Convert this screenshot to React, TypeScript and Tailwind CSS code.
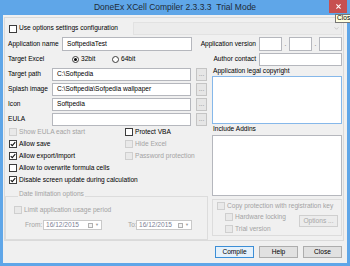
import type { ReactNode } from "react";

function CheckMark() {
  return (
    <svg viewBox="0 0 8 8" className="h-[6px] w-[6px]">
      <path d="M1 4.2 L3 6.2 L7 1.5" fill="none" stroke="#111" strokeWidth="1.4" />
    </svg>
  );
}

function Check({ label, checked, disabled }: { label: string; checked?: boolean; disabled?: boolean }) {
  return (
    <div className="flex h-[12px] items-center">
      <div
        className={
          disabled
            ? "ml-[1px] flex h-[8px] w-[8px] items-center justify-center border border-[#cfcfcf] bg-[#e9e9e9]"
            : "ml-[1px] flex h-[8px] w-[8px] items-center justify-center border border-[#3c3c3c] bg-white"
        }
      >
        {checked && <CheckMark />}
      </div>
      <span className={disabled ? "ml-[2px] whitespace-nowrap text-[#a3a3a3]" : "ml-[2px] whitespace-nowrap text-black"}>
        {label}
      </span>
    </div>
  );
}

function Radio({ label, selected }: { label: string; selected?: boolean }) {
  return (
    <div className="flex w-[40px] items-center">
      <div className="flex h-[7px] w-[7px] items-center justify-center rounded-full border border-[#3c3c3c] bg-white">
        {selected && <div className="h-[3px] w-[3px] rounded-full bg-black" />}
      </div>
      <span className="ml-[2px]">{label}</span>
    </div>
  );
}

function TextBox({ width, value }: { width: string; value?: string }) {
  return (
    <div className={`${width} flex h-[13px] items-center border border-[#b5b7bd] bg-white pl-[4px]`}>
      {value}
    </div>
  );
}

function PathRow({ label, value }: { label: string; value?: string }) {
  return (
    <div className="mt-[2px] flex h-[13px] items-center">
      <span className="w-[44px]">{label}</span>
      <TextBox width="w-[139px]" value={value} />
      <div className="ml-[5px] flex h-[13px] w-[11px] items-center justify-center border border-[#c4c4c4] bg-[#e6e6e6] text-[#8a8a8a] leading-none">
        ...
      </div>
    </div>
  );
}

function DatePicker({ width }: { width: string }) {
  return (
    <div className={`${width} flex h-[10px] items-center border border-[#c9c9c9] bg-white pl-[2px] text-[#7c7f95]`}>
      <span>16/12/2015</span>
      <div className="ml-auto mr-[2px] flex items-center">
        <div className="h-[5px] w-[5px] border border-[#b0b0b0] bg-[#f4f4f4]" />
        <span className="ml-[2px] text-[4px] text-[#9a9a9a]">▼</span>
      </div>
    </div>
  );
}

function Button({ children, primary, disabled }: { children: ReactNode; primary?: boolean; disabled?: boolean }) {
  const tone = primary
    ? "border-[#3c8ed6] bg-[#e5f1fb] text-black"
    : disabled
      ? "border-[#cfcfcf] bg-[#ececec] text-[#a6a6a6]"
      : "border-[#adadad] bg-[#e1e1e1] text-black";
  return <div className={`flex h-[12px] w-[39px] items-center justify-center border ${tone}`}>{children}</div>;
}

export default function App() {
  return (
    <div className="relative flex h-[266px] w-[350px] flex-col overflow-hidden bg-[#5fa6e8] font-['Liberation_Sans',Arial,sans-serif] text-[6.6px] leading-none text-black">
      <div className="flex h-[15px] items-center justify-center text-[8.5px] text-[#1e2a36]">
        DoneEx XCell Compiler 2.3.3.3&nbsp;&nbsp;Trial Mode
      </div>
      <div className="absolute left-[329px] top-0 flex h-[13px] w-[18px] items-center justify-center bg-[#c75050]">
        <svg viewBox="0 0 6 6" className="h-[5px] w-[5px]">
          <path d="M0.5 0.5 L5.5 5.5 M5.5 0.5 L0.5 5.5" stroke="#fff" strokeWidth="1.3" />
        </svg>
      </div>
      <div className="absolute left-[335px] top-[14px] flex h-[9px] w-[30px] items-center border border-[#767676] bg-[#ffffe1] pl-[1px] text-[6.6px]">
        Close
      </div>

      <div className="mx-[3px] flex h-[248px] flex-col bg-[#f0f0f0]">
        <div className="ml-[1px] mt-[2px] flex h-[224px] w-[340px] flex-col border border-[#dadada] pl-[3px] pr-[1px] pt-[4px]">
          <div className="flex h-[13px] items-center">
            <div className="ml-[1px] h-[8px] w-[8px] border border-[#3c3c3c] bg-white" />
            <span className="ml-[2px]">Use options settings configuration</span>
            <div className="ml-auto flex h-[13px] w-[209px] items-center justify-end border border-[#e2e2e2] bg-[#ececec] pr-[2px]">
              <svg viewBox="0 0 6 4" className="h-[3px] w-[5px]">
                <path d="M0.5 0.5 L3 3 L5.5 0.5" fill="none" stroke="#b0b0b0" strokeWidth="0.8" />
              </svg>
            </div>
          </div>

          <div className="mt-[2px] flex h-[14px] items-center">
            <span className="w-[54px]">Application name</span>
            <div className="flex h-[14px] w-[130px] items-center border border-[#b5b7bd] bg-white pl-[4px]">SoftpediaTest</div>
            <span className="ml-auto mr-[3px]">Application version</span>
            <div className="h-[14px] w-[23px] border border-[#b5b7bd] bg-white" />
            <span className="flex w-[7px] justify-center text-[#666]">.</span>
            <div className="h-[14px] w-[23px] border border-[#b5b7bd] bg-white" />
            <span className="flex w-[7px] justify-center text-[#666]">.</span>
            <div className="h-[14px] w-[23px] border border-[#b5b7bd] bg-white" />
          </div>

          <div className="mt-[2px] flex h-[13px] items-center">
            <span className="w-[64px]">Target Excel</span>
            <Radio label="32bit" selected />
            <Radio label="64bit" />
            <span className="ml-auto mr-[3px]">Author contact</span>
            <TextBox width="w-[83px]" />
          </div>

          <div className="flex">
            <div className="flex w-[200px] flex-col">
              <PathRow label="Target path" value="C:\Softpedia" />
              <PathRow label="Splash image" value="C:\Softpedia\Sofpedia wallpaper" />
              <PathRow label="Icon" value="Softpedia" />
              <PathRow label="EULA" />

              <div className="flex">
                <div className="w-[116px]">
                  <Check label="Show EULA each start" disabled />
                  <Check label="Allow save" checked />
                  <Check label="Allow export/import" checked />
                </div>
                <div>
                  <Check label="Protect VBA" />
                  <Check label="Hide Excel" disabled />
                  <Check label="Password protection" disabled />
                </div>
              </div>
              <Check label="Allow to overwrite formula cells" />
              <Check label="Disable screen update during calculation" checked />

              <div className="relative ml-[-3px] mt-[10px] flex h-[44px] w-[203px] flex-col border border-[#dcdcdc] pl-[7px]">
                <span className="absolute left-[12px] top-[-7px] flex h-[8px] items-center bg-[#f0f0f0] px-[1px] text-[#a3a3a3]">
                  Date limitation options
                </span>
                <div className="mt-[7px]">
                  <Check label="Limit application usage period" disabled />
                </div>
                <div className="mt-[4px] flex h-[10px] items-center">
                  <span className="ml-[12px] w-[18px] text-[#a3a3a3]">From:</span>
                  <DatePicker width="w-[59px]" />
                  <span className="ml-[26px] w-[8px] text-[#a3a3a3]">To:</span>
                  <DatePicker width="w-[56px]" />
                </div>
              </div>
            </div>

            <div className="ml-auto flex w-[130px] flex-col">
              <span className="flex h-[10px] items-center pl-[1px]">Application legal copyright</span>
              <div className="h-[48px] border border-[#86b8ea] bg-white" />
              <span className="flex h-[11px] items-center pl-[1px]">Include Addins</span>
              <div className="h-[61px] border border-[#b5b7bd] bg-white" />
              <div className="mt-[3px] flex h-[37px] flex-col border border-[#dcdcdc] pl-[3px] pt-[1px]">
                <div className="flex h-[10px] items-center">
                  <Check label="Copy protection with registration key" disabled />
                </div>
                <div className="flex">
                  <div className="pl-[8px]">
                    <Check label="Hardware locking" disabled />
                    <Check label="Trial version" disabled />
                  </div>
                  <div className="ml-auto mr-[3px] mt-[4px]">
                    <Button disabled>Options ...</Button>
                  </div>
                </div>
              </div>
            </div>
          </div>
        </div>

        <div className="mt-[5px] flex justify-end gap-[5px] pr-[5px]">
          <Button primary>Compile</Button>
          <Button>Help</Button>
          <Button>Close</Button>
        </div>
      </div>
    </div>
  );
}
